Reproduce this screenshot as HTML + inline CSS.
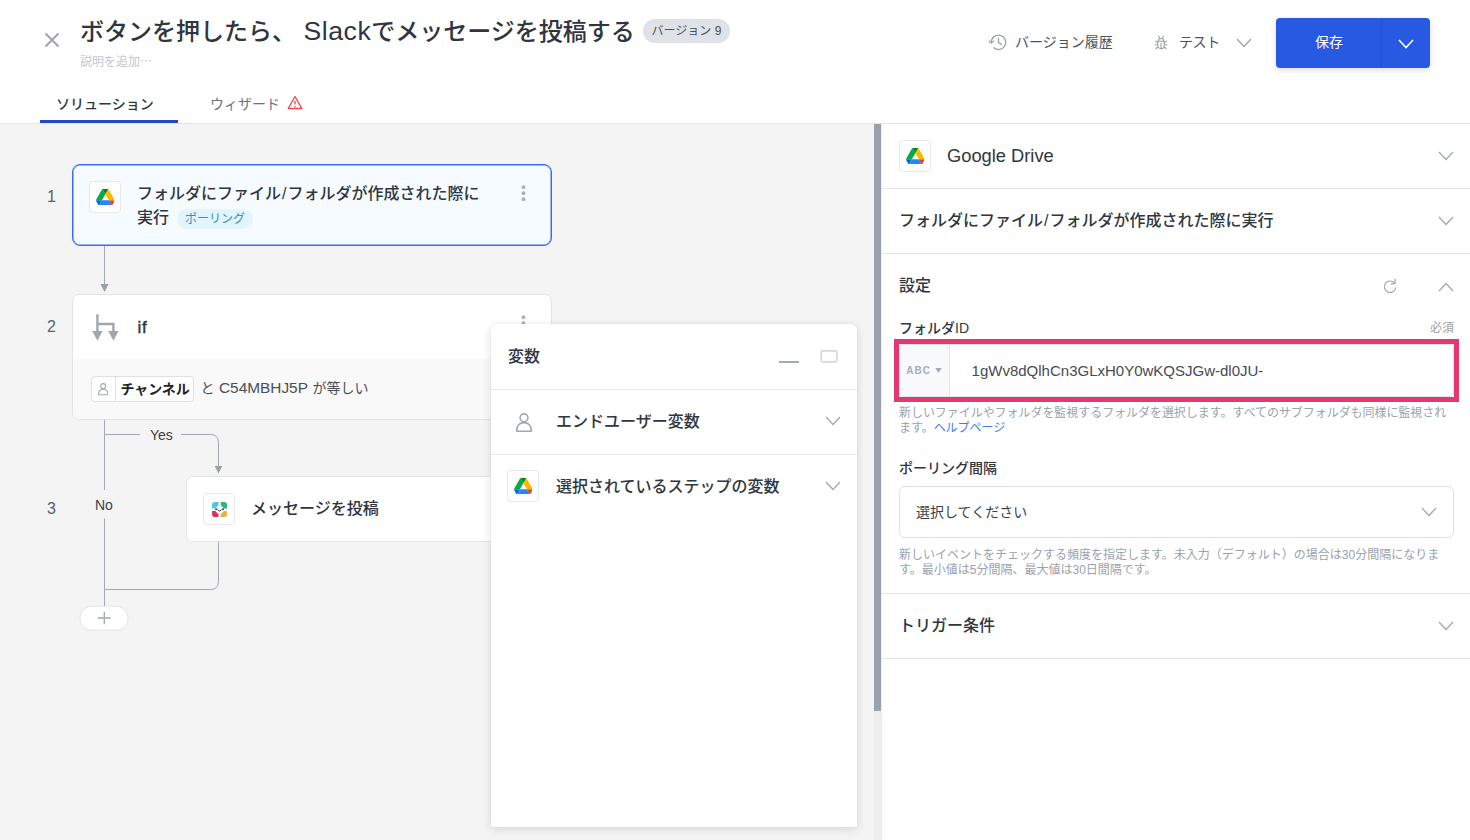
<!DOCTYPE html>
<html lang="ja">
<head>
<meta charset="utf-8">
<title>レシピ</title>
<style>
*{box-sizing:border-box;margin:0;padding:0}
html,body{width:1470px;height:840px;overflow:hidden;background:#fff}
body{font-family:"Liberation Sans","Noto Sans CJK JP",sans-serif;color:#2f3640;position:relative;-webkit-font-smoothing:antialiased}
.abs{position:absolute}
.t{position:absolute;white-space:nowrap;line-height:1}
.m{font-weight:500}
.b{font-weight:700}
/* header */
#header{position:absolute;left:0;top:0;width:1470px;height:124px;background:#fff;border-bottom:1px solid #e3e5e8}
#title{left:80px;top:20px;font-size:24px;font-weight:500;color:#2f3640;letter-spacing:0}
#ver{position:absolute;left:643px;top:19px;width:87px;height:24px;border-radius:12px;background:#dfe2e6;font-size:12px;color:#4a4f57;text-align:center;line-height:24px}
#desc{left:80px;top:54.800px;font-size:12px;color:#c3c7cd;font-family:"Noto Sans CJK JP",sans-serif}
#tab1{left:56px;top:96.500px;font-size:14px;font-weight:500;color:#2f3640}
#tab1u{position:absolute;left:40px;top:120px;width:138px;height:3px;background:#2446c8}
#tab2{left:210px;top:96.500px;font-size:14px;color:#6d737c}
#hist{left:1015px;top:35px;font-size:14px;color:#4b5361}
#test{left:1179px;top:35px;font-size:14px;color:#4b5361;letter-spacing:-.4px}
#save{position:absolute;left:1276px;top:17.5px;width:154px;height:50.5px;border-radius:4px;background:#2759e2;box-shadow:0 2px 6px rgba(0,0,0,.14)}
#save .lbl{left:39px;top:17.200px;font-size:14px;color:#fff;font-weight:400}
#save .div{position:absolute;left:104px;top:0;width:2px;height:50.5px;background:#2555d8}
/* canvas */
#canvas{position:absolute;left:0;top:124px;width:874px;height:716px;background:#f4f4f4}
#sb{position:absolute;left:874px;top:124px;width:8px;height:716px;background:#eceef0}
#sbt{position:absolute;left:874.200px;top:124px;width:7.900px;height:586.500px;background:#9aa1ad}
.num{font-size:16px;color:#59606a}
.card{position:absolute;background:#fff;border:1px solid #e1e4e9;border-radius:7px}
.ibox{position:absolute;width:32px;height:32px;background:#fff;border:1px solid #e6e8eb;border-radius:4px}
.ct{font-size:16px;font-weight:500;color:#2f3640}
/* right panel */
#right{position:absolute;left:882px;top:124px;width:588px;height:716px;background:#fff;box-shadow:-1px 0 0 #eceef0}
.hr{position:absolute;left:0;width:588px;height:1px;background:#e3e5e8}
.help{position:absolute;font-size:12px;line-height:15.400px;color:#9aa2ac;white-space:nowrap}
.help a{color:#3a7df2;text-decoration:none}
</style>
</head>
<body>
<div id="header">
  <svg class="abs" style="left:44px;top:32px" width="16" height="16" viewBox="0 0 16 16"><path d="M1.5 1.5L14.5 14.5M14.5 1.5L1.5 14.5" stroke="#9ba3ae" stroke-width="1.900" fill="none"/></svg>
  <div class="t" id="title">ボタンを押したら、<span style="display:inline-block;width:7.500px"></span><span style="font-size:26.600px;line-height:0;letter-spacing:.550px">Slack</span>でメッセージを投稿する</div>
  <div id="ver">バージョン 9</div>
  <div class="t" id="desc">説明を追加…</div>
  <div class="t" id="tab1">ソリューション</div>
  <div id="tab1u"></div>
  <div class="t" id="tab2">ウィザード</div>
  <svg class="abs" style="left:287px;top:95px" width="16" height="15" viewBox="0 0 16 15"><path d="M8 1.5L14.8 13.5H1.2Z" stroke="#e5484d" stroke-width="1.3" fill="none" stroke-linejoin="round"/><path d="M8 5.8V9.6M8 11V12.2" stroke="#e5484d" stroke-width="1.3"/></svg>
  <svg class="abs" style="left:988px;top:33px" width="20" height="18" viewBox="0 0 20 18"><path d="M3.300 9.300A7.200 7.200 0 1 1 5.600 14.600" stroke="#9aa1ab" stroke-width="1.300" fill="none"/><path d="M0.800 7.600L3.400 10.200L6 7.600" stroke="#9aa1ab" stroke-width="1.300" fill="none"/><path d="M10.500 4.800V9.600L13.800 11.600" stroke="#9aa1ab" stroke-width="1.300" fill="none"/></svg>
  <div class="t" id="hist">バージョン履歴</div>
  <svg class="abs" style="left:1154px;top:35px" width="14" height="15" viewBox="0 0 14 15"><g stroke="#9aa1ab" stroke-width="1.100" fill="none"><path d="M3.800 6.200H10.200V10.400A3.200 3.200 0 0 1 3.800 10.400Z"/><path d="M4.300 6.200A2.700 2.700 0 0 1 9.700 6.200"/><path d="M7 8V13.400M4.400 0.800L5.700 3.200M9.600 0.800L8.300 3.200M3.800 7.600L1.200 6M10.200 7.600L12.800 6M3.800 9.800H0.800M10.200 9.800H13.200M4.200 12L1.600 13.800M9.800 12L12.400 13.800"/></g></svg>
  <div class="t" id="test">テスト</div>
  <svg class="abs" style="left:1236px;top:38px" width="16" height="10" viewBox="0 0 16 10"><path d="M1 1L8 8.5L15 1" stroke="#a0a6ae" stroke-width="1.3" fill="none"/></svg>
  <div id="save"><div class="t lbl">保存</div><div class="div"></div>
    <svg class="abs" style="left:122px;top:21px" width="16" height="10" viewBox="0 0 16 10"><path d="M1 1L8 8.5L15 1" stroke="#fff" stroke-width="1.6" fill="none"/></svg>
  </div>
</div>

<div id="canvas">
  <div class="t num" style="left:47px;top:65px">1</div>
  <div class="t num" style="left:47px;top:195px">2</div>
  <div class="t num" style="left:47px;top:377px">3</div>
  <!-- connectors -->
  <svg class="abs" style="left:0;top:0" width="874" height="716" viewBox="0 0 874 716">
    <g stroke="#a3a9b2" stroke-width="1" fill="none">
      <path d="M104.500 121V160"/>
      <path d="M104.500 295V366M104.500 394.500V482"/>
      <path d="M104.500 310.500H140M181 310.500H210.500Q218.500 310.500 218.500 318.500V342"/>
      <path d="M218.500 417V457.500Q218.500 465.500 210.500 465.500H104.500"/>
    </g>
    <path d="M100.500 160H108.500L104.500 168Z" fill="#9aa0a9"/>
    <path d="M214.700 342H222.300L218.500 349.500Z" fill="#9aa0a9"/>
  </svg>
  <div class="t" style="left:150px;top:304px;font-size:14px;color:#3a3f47">Yes</div>
  <div class="t" style="left:95px;top:374px;font-size:14px;color:#3a3f47">No</div>
  <!-- step 1 -->
  <div class="card" style="left:72px;top:40px;width:480px;height:82px;background:#f6fbff;border-color:#3a6df0;border-radius:8px;box-shadow:inset 0 0 0 .500px #3a6df0">
    <div class="ibox" style="left:16px;top:16px"><svg viewBox="0 0 87.3 78" width="18.700" height="16.700" style="position:absolute;left:5.600px;top:6.500px"><path d="m6.6 66.85 3.85 6.65c.8 1.4 1.95 2.5 3.3 3.3l13.75-23.8h-27.5c0 1.55.4 3.1 1.2 4.5z" fill="#0066da"/><path d="m43.65 25-13.75-23.8c-1.35.8-2.5 1.9-3.3 3.3l-25.4 44a9.06 9.06 0 0 0 -1.2 4.5h27.5z" fill="#00ac47"/><path d="m73.55 76.8c1.35-.8 2.5-1.9 3.3-3.3l1.6-2.75 7.65-13.25c.8-1.4 1.2-2.95 1.2-4.5h-27.502l5.852 11.5z" fill="#ea4335"/><path d="m43.65 25 13.75-23.8c-1.35-.8-2.9-1.2-4.5-1.2h-18.5c-1.6 0-3.150.45-4.5 1.2z" fill="#00832d"/><path d="m59.8 53h-32.3l-13.750 23.8c1.350.8 2.9 1.2 4.5 1.2h50.8c1.6 0 3.150-.45 4.5-1.2z" fill="#2684fc"/><path d="m73.4 26.500-12.700-22c-.8-1.400-1.950-2.500-3.300-3.300l-13.750 23.800 16.150 28h27.450c0-1.550-.4-3.100-1.200-4.500z" fill="#ffba00"/></svg></div>
    <div class="t ct" style="left:64px;top:21px">フォルダにファイル<span style="padding:0 1px">/</span>フォルダが作成された際に</div>
    <div class="t ct" style="left:64px;top:45.300px">実行</div>
    <div class="abs" style="left:104px;top:44px;width:76px;height:20px;border-radius:10px;background:#e2f4fc;color:#3d8fb3;font-size:12px;line-height:20px;text-align:center">ポーリング</div>
    <svg class="abs" style="left:447.6px;top:20px" width="5" height="17" viewBox="0 0 5 17"><circle cx="2.500" cy="2.200" r="1.900" fill="#a9afb8"/><circle cx="2.500" cy="8.200" r="1.900" fill="#a9afb8"/><circle cx="2.500" cy="14.200" r="1.900" fill="#a9afb8"/></svg>
  </div>
  <!-- step 2 -->
  <div class="card" style="left:72px;top:170px;width:480px;height:126px;overflow:hidden">
    <div class="abs" style="left:0;top:64px;width:480px;height:62px;background:#f9f9f9"></div>
    <svg class="abs" style="left:19px;top:17px" width="28" height="31" viewBox="0 0 28 31"><path d="M5.400 2.300V20M5.400 12H21.400V20" stroke="#a0a7b2" stroke-width="2.400" fill="none"/><path d="M0.200 19.100H10.600L5.400 28.700Z M16.200 19.100H26.600L21.400 28.700Z" fill="#a0a7b2"/></svg>
    <div class="t ct" style="left:64.500px;top:24px;font-weight:400;font-size:17px;letter-spacing:.600px;-webkit-text-stroke:.450px #2f3640">if</div>
    <svg class="abs" style="left:447.6px;top:19.8px" width="5" height="17" viewBox="0 0 5 17"><circle cx="2.500" cy="2.200" r="1.900" fill="#a9afb8"/><circle cx="2.500" cy="8.200" r="1.900" fill="#a9afb8"/><circle cx="2.500" cy="14.200" r="1.900" fill="#a9afb8"/></svg>
    <div class="abs" style="left:18px;top:81px;width:103px;height:26px;border:1px solid #dde1e6;border-radius:4px;background:#fff">
      <div class="abs" style="left:23px;top:0;width:1px;height:24px;background:#dde1e6"></div>
      <svg class="abs" style="left:5.9px;top:6.4px" width="10.4" height="12.35" viewBox="0 0 16 19"><circle cx="8" cy="4.800" r="3.900" stroke="#a0a7b2" stroke-width="1.7" fill="none"/><path d="M0.800 18.200V17C0.800 12.300 4 9.600 8 9.600S15.200 12.300 15.200 17V18.200Z" stroke="#a0a7b2" stroke-width="1.7" fill="none" stroke-linejoin="round"/></svg>
      <div class="t b" style="left:28.500px;top:5px;font-size:14px;color:#1f2329;letter-spacing:-.100px">チャンネル</div>
    </div>
    <div class="t" style="left:127.400px;top:86px;font-size:14px;color:#4a4f57;word-spacing:.700px">と <span style="font-size:15.400px;line-height:0">C54MBHJ5P</span> が等しい</div>
  </div>
  <!-- step 3 -->
  <div class="card" style="left:186px;top:352px;width:366px;height:66px">
    <div class="ibox" style="left:16px;top:16px">
      <svg class="abs" style="left:7.500px;top:7.500px" width="15.200" height="15" viewBox="0 0 16 16"><path d="M0 3a3 3 0 0 1 3-3h3.800v3.200L3.600 7H0z" fill="#56c1e6"/><path d="M9.200 0H13a3 3 0 0 1 3 3v4h-3.600L9.200 3.200z" fill="#34b27d"/><path d="M16 9.600V13a3 3 0 0 1-3 3H9.200v-2.800l3.200-3.600z" fill="#ebb23a"/><path d="M6.800 16H3a3 3 0 0 1-3-3V9.600h3.600l3.200 3.600z" fill="#dd2e5c"/><ellipse cx="4.400" cy="7.700" rx="1.300" ry=".800" fill="#1c2a4e" transform="rotate(-18 4.400 7.700)"/><ellipse cx="11.600" cy="7.700" rx="1.300" ry=".800" fill="#1c2a4e" transform="rotate(18 11.600 7.700)"/><path d="M6.200 8.700Q8 10.700 9.800 8.700" stroke="#1c2a4e" stroke-width="1" fill="none" stroke-linecap="round"/></svg>
    </div>
    <div class="t ct" style="left:64px;top:24px">メッセージを投稿</div>
  </div>
  <!-- plus -->
  <svg class="abs" style="left:78px;top:480px" width="53" height="28" viewBox="0 0 53 28"><rect x="1.900" y="2.200" width="48.200" height="23.900" rx="11.950" fill="#fff" stroke="#e1e4e8" stroke-width="1"/><path d="M26.300 7.700V20.300M20 14H32.600" stroke="#a0a7b2" stroke-width="1.300" fill="none"/></svg>
  <!-- variables panel -->
  <div class="abs" style="left:491px;top:200px;width:366px;height:503px;background:#fff;border-radius:6px 6px 0 0;box-shadow:0 2px 10px rgba(0,0,0,.13),0 0 1px rgba(0,0,0,.15)">
    <div class="t ct" style="left:17px;top:25px">変数</div>
    <div class="abs" style="left:288px;top:36.800px;width:20px;height:2.100px;background:#a3aab4"></div>
    <svg class="abs" style="left:329px;top:25px" width="19" height="15" viewBox="0 0 19 15"><rect x="1.200" y="1.900" width="15.700" height="11" rx="1.600" stroke="#d3d8de" stroke-width="1.600" fill="none"/></svg>
    <div class="abs" style="left:0;top:65px;width:366px;height:1px;background:#e3e6ea"></div>
    <svg class="abs" style="left:24.6px;top:88.5px" width="16" height="19" viewBox="0 0 16 19"><circle cx="8" cy="4.800" r="3.900" stroke="#a0a7b2" stroke-width="1.6" fill="none"/><path d="M0.800 18.200V17C0.800 12.300 4 9.600 8 9.600S15.200 12.300 15.200 17V18.200Z" stroke="#a0a7b2" stroke-width="1.6" fill="none" stroke-linejoin="round"/></svg>
    <div class="t ct" style="left:65px;top:90px">エンドユーザー変数</div>
    <svg class="abs" style="left:334px;top:92px" width="16" height="10" viewBox="0 0 16 10"><path d="M1 1L8 8.5L15 1" stroke="#a0a7b2" stroke-width="1.2" fill="none"/></svg>
    <div class="abs" style="left:0;top:130px;width:366px;height:1px;background:#e3e6ea"></div>
    <div class="ibox" style="left:16px;top:146px"><svg viewBox="0 0 87.3 78" width="18.700" height="16.700" style="position:absolute;left:5.600px;top:6.500px"><path d="m6.6 66.85 3.85 6.65c.8 1.4 1.95 2.5 3.3 3.3l13.75-23.8h-27.5c0 1.55.4 3.1 1.2 4.5z" fill="#0066da"/><path d="m43.65 25-13.75-23.8c-1.35.8-2.5 1.9-3.3 3.3l-25.4 44a9.06 9.06 0 0 0 -1.2 4.5h27.5z" fill="#00ac47"/><path d="m73.55 76.8c1.35-.8 2.5-1.9 3.3-3.3l1.6-2.75 7.65-13.25c.8-1.4 1.2-2.95 1.2-4.5h-27.502l5.852 11.5z" fill="#ea4335"/><path d="m43.65 25 13.75-23.8c-1.35-.8-2.9-1.2-4.5-1.2h-18.5c-1.6 0-3.150.45-4.5 1.2z" fill="#00832d"/><path d="m59.8 53h-32.3l-13.750 23.8c1.350.8 2.9 1.2 4.5 1.2h50.8c1.6 0 3.150-.45 4.5-1.2z" fill="#2684fc"/><path d="m73.4 26.500-12.700-22c-.8-1.400-1.950-2.500-3.300-3.300l-13.750 23.800 16.150 28h27.450c0-1.550-.4-3.100-1.200-4.500z" fill="#ffba00"/></svg></div>
    <div class="t ct" style="left:65px;top:155px">選択されているステップの変数</div>
    <svg class="abs" style="left:334px;top:157px" width="16" height="10" viewBox="0 0 16 10"><path d="M1 1L8 8.5L15 1" stroke="#a0a7b2" stroke-width="1.2" fill="none"/></svg>
  </div>
</div>
<div id="sb"></div><div id="sbt"></div>
<div id="right">
  <div class="ibox" style="left:17px;top:16px"><svg viewBox="0 0 87.3 78" width="18.700" height="16.700" style="position:absolute;left:5.600px;top:6.500px"><path d="m6.6 66.85 3.85 6.65c.8 1.4 1.95 2.5 3.3 3.3l13.75-23.8h-27.5c0 1.55.4 3.1 1.2 4.5z" fill="#0066da"/><path d="m43.65 25-13.75-23.8c-1.35.8-2.5 1.9-3.3 3.3l-25.4 44a9.06 9.06 0 0 0 -1.2 4.5h27.5z" fill="#00ac47"/><path d="m73.55 76.8c1.35-.8 2.5-1.9 3.3-3.3l1.6-2.75 7.65-13.25c.8-1.4 1.2-2.95 1.2-4.5h-27.502l5.852 11.5z" fill="#ea4335"/><path d="m43.65 25 13.75-23.8c-1.35-.8-2.9-1.2-4.5-1.2h-18.5c-1.6 0-3.150.45-4.5 1.2z" fill="#00832d"/><path d="m59.8 53h-32.3l-13.750 23.8c1.350.8 2.9 1.2 4.5 1.2h50.8c1.6 0 3.150-.45 4.5-1.2z" fill="#2684fc"/><path d="m73.4 26.500-12.700-22c-.8-1.400-1.950-2.500-3.300-3.300l-13.750 23.800 16.150 28h27.450c0-1.550-.4-3.100-1.200-4.500z" fill="#ffba00"/></svg></div>
  <div class="t" style="left:65px;top:23px;font-size:18.300px;color:#2f3640">Google Drive</div>
  <svg class="abs" style="left:555.800px;top:27px" width="16" height="10" viewBox="0 0 16 10"><path d="M1 1L8 8.5L15 1" stroke="#a0a7b2" stroke-width="1.2" fill="none"/></svg>
  <div class="hr" style="top:64px"></div>
  <div class="t ct" style="left:17px;top:89px">フォルダにファイル<span style="padding:0 1px">/</span>フォルダが作成された際に実行</div>
  <svg class="abs" style="left:555.800px;top:92px" width="16" height="10" viewBox="0 0 16 10"><path d="M1 1L8 8.5L15 1" stroke="#a0a7b2" stroke-width="1.2" fill="none"/></svg>
  <div class="hr" style="top:129px"></div>
  <div class="t ct" style="left:17px;top:154px">設定</div>
  <svg class="abs" style="left:500px;top:154px" width="16" height="16" viewBox="0 0 16 16"><path d="M13.740 9.490A5.700 5.700 0 1 1 12.600 5.200" stroke="#a0a7b2" stroke-width="1.200" fill="none"/><path d="M13.200 0.800L12.900 5.400L8.800 6.200" stroke="#a0a7b2" stroke-width="1.200" fill="none"/></svg>
  <svg class="abs" style="left:555.700px;top:157.600px" width="16" height="10" viewBox="0 0 16 10"><path d="M1 9L8 1.500L15 9" stroke="#a0a7b2" stroke-width="1.2" fill="none"/></svg>
  <div class="t m" style="left:17px;top:196.500px;font-size:14px;color:#2f3640">フォルダID</div>
  <div class="t" style="left:548px;top:198px;font-size:12px;color:#9ba1a9">必須</div>
  <!-- highlighted input -->
  <div class="abs" style="left:17px;top:220px;width:555px;height:53px;border:1px solid #e1e4e8;border-radius:4px;background:#fff;overflow:hidden">
    <div class="abs" style="left:0;top:0;width:50px;height:51px;background:#f8f9fa;border-right:1px solid #e3e6ea"></div>
    <div class="t b" style="left:6.200px;top:21px;font-size:10px;letter-spacing:1.050px;color:#a7adb8">ABC</div>
    <svg class="abs" style="left:35.400px;top:23.400px" width="7" height="5" viewBox="0 0 7 5"><path d="M0.200 0H6.800L3.500 5Z" fill="#a7adb8"/></svg>
    <div class="t" style="left:71.600px;top:18px;font-size:15px;color:#454b55">1gWv8dQlhCn3GLxH0Y0wKQSJGw-dl0JU-</div>
  </div>
  <div class="abs" style="left:12.300px;top:215.300px;width:564.500px;height:62.600px;border:5px solid #e6376f"></div>
  <div class="help" style="left:17px;top:281.500px;letter-spacing:-.050px">新しいファイルやフォルダを監視するフォルダを選択します。すべてのサブフォルダも同様に監視され<br>ます。<a>ヘルプページ</a></div>
  <div class="t m" style="left:17px;top:337px;font-size:14px;color:#2f3640">ポーリング間隔</div>
  <div class="abs" style="left:17px;top:362px;width:555px;height:52px;border:1px solid #dfe1e5;border-radius:6px;background:#fff">
    <div class="t" style="left:16px;top:18px;font-size:14px;color:#3a3f47">選択してください</div>
    <svg class="abs" style="left:521.300px;top:20px" width="16" height="10" viewBox="0 0 16 10"><path d="M1 1L8 8.5L15 1" stroke="#a0a7b2" stroke-width="1.2" fill="none"/></svg>
  </div>
  <div class="help" style="left:17px;top:423.500px">新しいイベントをチェックする頻度を指定します。未入力（デフォルト）の場合は30分間隔になりま<br>す。最小値は5分間隔、最大値は30日間隔です。</div>
  <div class="hr" style="top:469px"></div>
  <div class="t ct" style="left:17px;top:494px">トリガー条件</div>
  <svg class="abs" style="left:555.800px;top:497px" width="16" height="10" viewBox="0 0 16 10"><path d="M1 1L8 8.5L15 1" stroke="#a0a7b2" stroke-width="1.2" fill="none"/></svg>
  <div class="hr" style="top:534px"></div>
</div>
</body>
</html>
